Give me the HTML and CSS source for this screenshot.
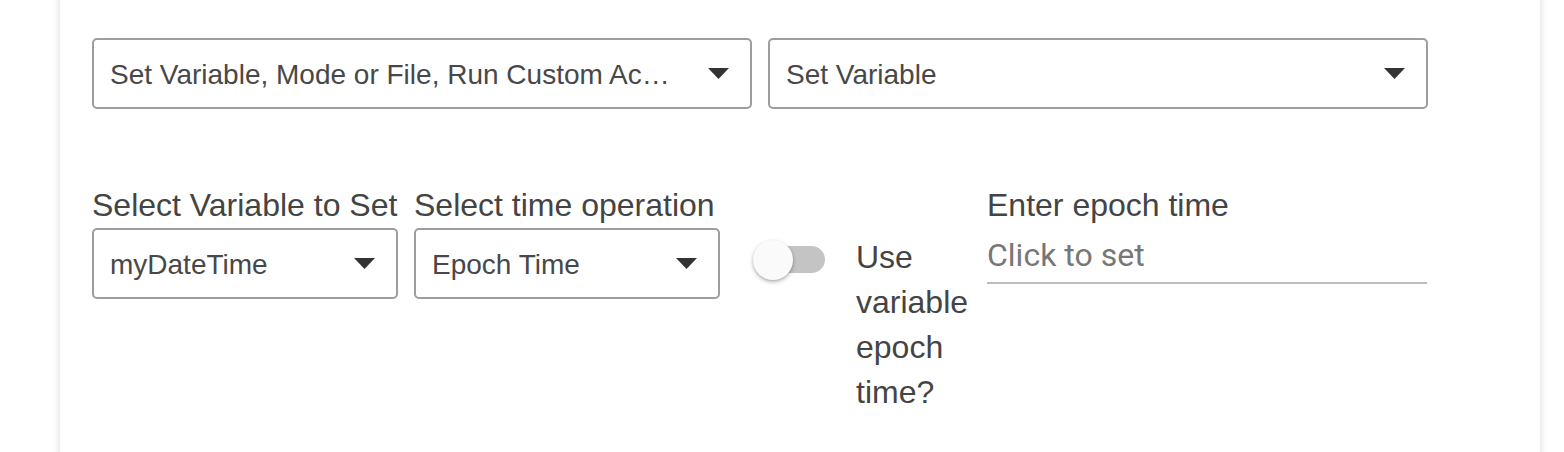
FILE: index.html
```html
<!DOCTYPE html>
<html lang="en">

<head>
  <meta charset="UTF-8">
  <meta name="viewport" content="width=device-width, initial-scale=1.0">
  <link rel="stylesheet" href="styles.css">
  <title>Set Variable</title>
</head>

<body>
  <div class="card">
    <!-- linha de cima: tipo de ação -->
    <div class="row top-row">
      <div class="select wide">
        <span class="select-text">Set Variable, Mode or File, Run Custom Ac…</span>
        <svg class="arrow" width="21" height="11" viewBox="0 0 21 11"><path d="M0 0 H21 L10.5 11 Z" /></svg>
      </div>
      <div class="select wide">
        <span class="select-text">Set Variable</span>
        <svg class="arrow" width="21" height="11" viewBox="0 0 21 11"><path d="M0 0 H21 L10.5 11 Z" /></svg>
      </div>
    </div>

    <!-- linha de baixo: variavel e tempo -->
    <div class="row bottom-row">
      <div class="field">
        <div class="label">Select Variable to Set</div>
        <div class="select small">
          <span class="select-text">myDateTime</span>
          <svg class="arrow" width="21" height="11" viewBox="0 0 21 11"><path d="M0 0 H21 L10.5 11 Z" /></svg>
        </div>
      </div>
      <div class="field">
        <div class="label">Select time operation</div>
        <div class="select small">
          <span class="select-text">Epoch Time</span>
          <svg class="arrow" width="21" height="11" viewBox="0 0 21 11"><path d="M0 0 H21 L10.5 11 Z" /></svg>
        </div>
      </div>
      <div class="switch-field">
        <div class="switch">
          <div class="track"></div>
          <div class="thumb"></div>
        </div>
        <div class="switch-label">Use variable epoch time?</div>
      </div>
      <div class="field epoch">
        <div class="label">Enter epoch time</div>
        <div class="text-input">Click to set</div>
      </div>
    </div>
  </div>
</body>

</html>
```

FILE: styles.css
```css
body {
  margin: 0;
  background-color: #fff;
  font-family: 'Liberation Sans', Arial, sans-serif;
  color: #444;
  overflow: hidden;
}

.card {
  margin: -20px 24px 0 60px;
  padding: 58px 32px 0 32px;
  height: 520px;
  background-color: #fff;
  box-shadow: 0 0 8px rgba(0, 0, 0, 0.16);
}

.row {
  display: flex;
}

.top-row {
  gap: 16px;
}

.bottom-row {
  margin-top: 79px;
  align-items: flex-start;
}

.select {
  display: flex;
  align-items: center;
  box-sizing: border-box;
  height: 71px;
  padding: 2px 21px 0 16px;
  border: 2px solid #9e9e9e;
  border-radius: 5px;
  font-size: 28px;
  color: #484848;
}

.select.wide {
  width: 660px;
}

.select.small {
  width: 306px;
}

.select-text {
  flex: 1;
  min-width: 0;
  white-space: nowrap;
  margin-right: 12px;
}

.arrow {
  flex: none;
  fill: #333;
  margin-top: -2px;
}

.field {
  display: flex;
  flex-direction: column;
  width: 306px;
  margin-right: 16px;
}

.label {
  font-size: 32px;
  line-height: 34px;
  margin-bottom: 6px;
  white-space: nowrap;
}

.switch-field {
  display: flex;
  margin-left: 17px;
  margin-top: 40px;
  margin-right: 18px;
}

.switch {
  position: relative;
  width: 72px;
  height: 40px;
  margin-top: 12px;
}

.track {
  position: absolute;
  left: 4px;
  right: 0;
  top: 6px;
  height: 27px;
  border-radius: 14px;
  background-color: #c4c4c4;
}

.thumb {
  position: absolute;
  left: 0;
  top: 0;
  width: 40px;
  height: 40px;
  border-radius: 50%;
  background-color: #fafafa;
  box-shadow: 0 2px 4px rgba(0, 0, 0, 0.25), 0 1px 2px rgba(0, 0, 0, 0.12);
}

.switch-label {
  width: 113px;
  margin-left: 31px;
  margin-top: 7px;
  font-size: 32px;
  line-height: 45px;
}

.field.epoch {
  width: 440px;
  margin-right: 0;
}

.text-input {
  font-family: Roboto, 'Liberation Sans', sans-serif;
  font-size: 32px;
  color: #777;
  height: 56px;
  line-height: 54px;
  border-bottom: 2px solid #bdbdbd;
  box-sizing: border-box;
}
```
